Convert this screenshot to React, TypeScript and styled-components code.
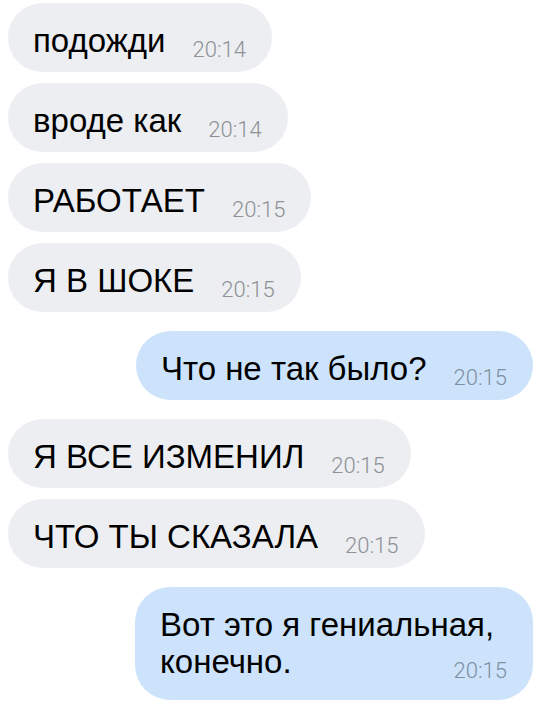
import styled, { createGlobalStyle } from 'styled-components';

const GlobalStyle = createGlobalStyle`
  html, body {
    margin: 0;
    padding: 0;
    background: #ffffff;
  }
  body {
    font-family: 'Liberation Sans', Arial, sans-serif;
  }
`;

const Chat = styled.div`
  display: flex;
  flex-direction: column;
  padding: 3px 18px 0 8px;
  width: 551px;
  box-sizing: border-box;
`;

const Bubble = styled.div<{ $out?: boolean; $gap: number; $max?: number; $pb?: number }>`
  display: flow-root;
  box-sizing: border-box;
  align-self: ${(p) => (p.$out ? 'flex-end' : 'flex-start')};
  width: fit-content;
  max-width: ${(p) => p.$max ?? 500}px;
  margin-top: ${(p) => p.$gap}px;
  padding: 19px 26px ${(p) => p.$pb ?? 13}px 25px;
  border-radius: 35px;
  background: ${(p) => (p.$out ? '#cce3fb' : '#eceef1')};
  color: #000;
  font-size: 33px;
  line-height: 37px;
`;

const Time = styled.span<{ $out?: boolean }>`
  float: right;
  margin: 20px 0 0 27px;
  font-family: 'Roboto', 'Liberation Sans', sans-serif;
  font-weight: 300;
  font-size: 22px;
  line-height: 16px;
  color: ${(p) => (p.$out ? '#7d8fa3' : '#8e9196')};
`;

type Msg = { text: string; time: string; out?: boolean; max?: number; pb?: number };

const messages: Msg[] = [
  { text: 'подожди', time: '20:14' },
  { text: 'вроде как', time: '20:14' },
  { text: 'РАБОТАЕТ', time: '20:15' },
  { text: 'Я В ШОКЕ', time: '20:15' },
  { text: 'Что не так было?', time: '20:15', out: true },
  { text: 'Я ВСЕ ИЗМЕНИЛ', time: '20:15' },
  { text: 'ЧТО ТЫ СКАЗАЛА', time: '20:15' },
  { text: 'Вот это я гениальная, конечно.', time: '20:15', out: true, max: 398, pb: 20 },
];

export default function App() {
  return (
    <>
      <GlobalStyle />
      <Chat>
        {messages.map((m, i) => {
          const prev = messages[i - 1];
          const gap = i === 0 ? 0 : prev.out !== m.out ? 19 : 11;
          return (
            <Bubble key={i} $out={m.out} $gap={gap} $max={m.max} $pb={m.pb}>
              {m.text}
              <Time $out={m.out}>{m.time}</Time>
            </Bubble>
          );
        })}
      </Chat>
    </>
  );
}
